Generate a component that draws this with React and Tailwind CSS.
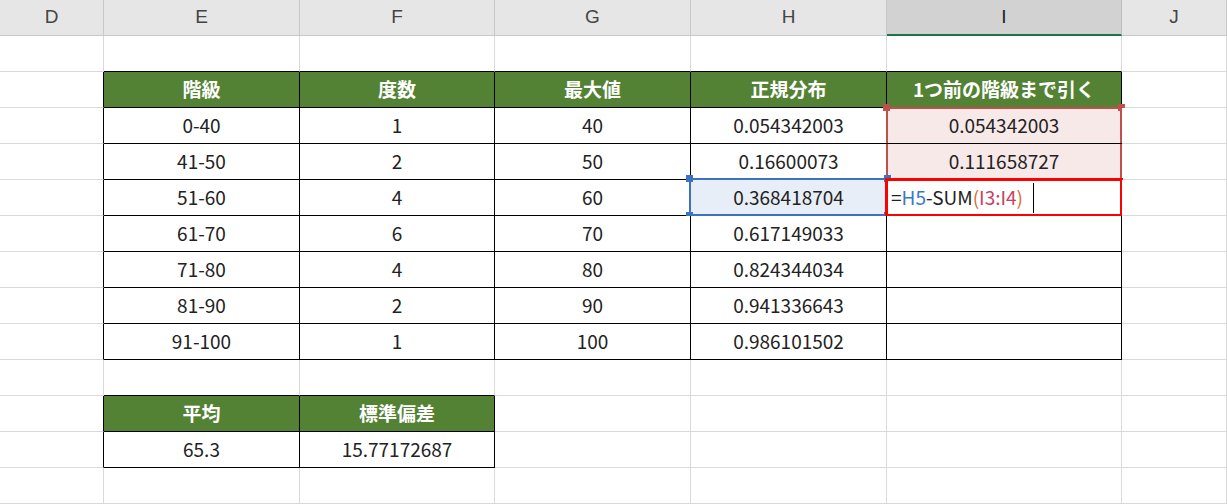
import React from 'react';

const cols = ['D', 'E', 'F', 'G', 'H', 'I', 'J'];
const widths = '104px 196px 195px 196px 196px 235px 105px';

const grid = [
  [],
  [null, '階級', '度数', '最大値', '正規分布', '1つ前の階級まで引く'],
  [null, '0-40', '1', '40', '0.054342003', '0.054342003'],
  [null, '41-50', '2', '50', '0.16600073', '0.111658727'],
  [null, '51-60', '4', '60', '0.368418704', ''],
  [null, '61-70', '6', '70', '0.617149033', ''],
  [null, '71-80', '4', '80', '0.824344034', ''],
  [null, '81-90', '2', '90', '0.941336643', ''],
  [null, '91-100', '1', '100', '0.986101502', ''],
  [],
  [null, '平均', '標準偏差'],
  [null, '65.3', '15.77172687'],
  [],
];

const inTable = (r, c) => {
  if (r >= 1 && r <= 8) return c >= 1 && c <= 5;
  if (r >= 10 && r <= 11) return c >= 1 && c <= 2;
  return false;
};
const isHead = (r, c) => inTable(r, c) && (r === 1 || r === 10);

const Handle = ({ className }) => (
  <span className={`absolute w-[7px] h-[7px] ${className}`} />
);

function Cell({ r, c }) {
  const text = grid[r][c] || '';
  const rightBlack = inTable(r, c) || inTable(r, c + 1);
  const bottomBlack = inTable(r, c) || inTable(r + 1, c);
  const head = isHead(r, c);
  let bg = head ? 'bg-[#548235]' : 'bg-white';
  if (c === 5 && (r === 2 || r === 3)) bg = 'bg-[#f8e9e9]';
  if (c === 4 && r === 4) bg = 'bg-[#e8eef8]';
  return (
    <div
      className={`relative h-[36px] flex items-center justify-center text-[19px] border-r border-b ${bg} ${rightBlack ? 'border-r-black' : 'border-r-[#d9d9d9]'} ${bottomBlack ? 'border-b-black' : 'border-b-[#d9d9d9]'} ${head ? 'text-white font-bold' : 'text-[#222]'}`}
    >
      {text}
      {c === 5 && r === 2 && (
        <>
          <span className="absolute -left-px -top-px -right-px bottom-0 border-x-2 border-t-2 border-[#c0504d]" />
          <Handle className="bg-[#c0504d] -left-[4px] -top-[4px]" />
          <Handle className="bg-[#c0504d] -right-[4px] -top-[4px]" />
        </>
      )}
      {c === 5 && r === 3 && (
        <span className="absolute -left-px top-0 -right-px bottom-0 border-x-2 border-[#c0504d]" />
      )}
      {c === 4 && r === 4 && (
        <>
          <span className="absolute -left-[2px] -top-[2px] -right-[2px] -bottom-[1px] border-2 border-[#3a72c4]" />
          <Handle className="bg-[#3a72c4] -left-[5px] -top-[5px]" />
          <Handle className="bg-[#3a72c4] -right-[5px] -top-[5px]" />
          <Handle className="bg-[#3a72c4] -left-[5px] -bottom-[4px]" />
          <Handle className="bg-[#3a72c4] -right-[5px] -bottom-[4px]" />
        </>
      )}
      {c === 5 && r === 4 && (
        <span className="absolute -left-[2px] -top-[2px] -right-[2px] -bottom-[2px] border-[3px] border-[#ff0000] bg-white flex items-center pl-[3px]">
          <span>=</span>
          <span className="text-[#3a78c4]">H5</span>
          <span>-SUM</span>
          <span className="text-[#d0703a]">(</span>
          <span className="text-[#c84060]">I3:I4</span>
          <span className="text-[#d0703a]">)</span>
          <span className="ml-[10px] w-px h-[30px] bg-black" />
        </span>
      )}
    </div>
  );
}

export default function App() {
  const rows = grid.length;
  return (
    <div
      className="w-[1227px] h-[504px] overflow-hidden bg-white"
      style={{ fontFamily: '"Noto Sans CJK JP", "Noto Sans", sans-serif' }}
    >
      <div className="grid" style={{ gridTemplateColumns: widths }}>
        {cols.map((h) => (
          <div
            key={h}
            className={`h-[36px] flex items-center justify-center text-[19px] border-r border-b ${h === 'I' ? 'bg-[#d2d2d2] border-r-[#bdbdbd] border-b-2 border-b-[#217346] text-[#222]' : 'bg-[#e6e6e6] border-r-[#c8c8c8] border-b-[#c8c8c8] text-[#444]'}`}
            style={{ fontFamily: '"Liberation Sans", sans-serif' }}
          >
            {h}
          </div>
        ))}
        {Array.from({ length: rows }).map((_, r) =>
          cols.map((_, c) => <Cell key={`${r}-${c}`} r={r} c={c} />)
        )}
      </div>
    </div>
  );
}
